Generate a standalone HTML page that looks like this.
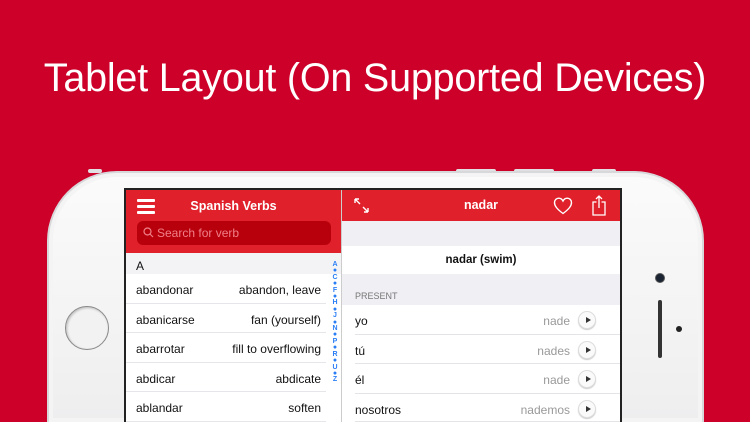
<!DOCTYPE html>
<html style="width:750px;height:422px;overflow:hidden"><head><style>
*{margin:0;padding:0;box-sizing:border-box}
body{width:750px;height:422px;overflow:hidden;background:#cc0029;font-family:"Liberation Sans",sans-serif;position:relative}
.title{position:absolute;top:56px;left:0;width:750px;text-align:center;color:#fff;font-size:39.5px;letter-spacing:-0.2px}
.phone{position:absolute;left:47px;top:171px;width:657px;height:251px;border-radius:70px 70px 0 0;background:linear-gradient(#fbfbfb,#eeeeef);border:2px solid #d8d8da;border-bottom:none;box-shadow:inset 0 0 0 4px #f4f4f5}
.btn{position:absolute;top:169px;height:4px;background:#e0e0e3;border-radius:2px}
.screen{position:absolute;left:124px;top:188px;width:498px;height:234px;background:#222;}
.left{position:absolute;left:126px;top:190px;width:215px;height:232px;background:#fff;overflow:hidden}
.lh{height:63px;background:#e0202a;position:relative}
.lh .t{position:absolute;top:9px;width:100%;text-align:center;color:#fff;font-weight:bold;font-size:12.5px}
.ham{position:absolute;left:11px;top:9px;width:18px}
.ham i{display:block;height:2.5px;background:#fff;margin-bottom:3.5px;border-radius:1px}
.search{position:absolute;left:11px;top:31px;width:194px;height:24px;border-radius:6px;background:#b8000c;color:#f08088;font-size:12px;line-height:24px;padding-left:20px}
.search svg{position:absolute;left:6px;top:6px}
.sec{height:21px;background:#f3f3f6;font-size:12px;padding:6px 0 0 10px;color:#111}
.row{height:29.5px;border-bottom:1px solid #e6e6ea;font-size:12px;color:#111;position:relative;margin-right:15px}
.row span{position:absolute;top:9px}
.row .a{left:10px}.row .b{right:5px}
.idx{position:absolute;left:330px;top:262px;width:10px;font-size:7px;color:#2a7ef5;text-align:center;line-height:6.4px;font-weight:bold}
.right{position:absolute;left:341px;top:190px;width:279px;height:232px;background:#efeff4;border-left:1px solid #ccc;overflow:hidden}
.rh{height:31px;background:#e0202a;position:relative;color:#fff;font-weight:bold;font-size:12.5px;text-align:center;line-height:31px}
.card{position:absolute;top:56px;left:0;width:100%;height:28px;background:#fff;text-align:center;font-weight:bold;font-size:11.5px;line-height:28px;color:#111}
.pres{position:absolute;top:101px;left:13px;font-size:9px;color:#777}
.list{position:absolute;top:115px;left:0;width:100%;background:#fff}
.cr{height:29.5px;position:relative;margin-left:13px;border-bottom:1px solid #e4e4e8;font-size:12px}
.cr .p{position:absolute;left:0;top:9px;color:#111}
.cr .v{position:absolute;right:50px;top:9px;color:#999}
.cr .pl{position:absolute;right:24px;top:6px;width:18px;height:18px;border-radius:50%;border:1px solid #ddd;background:#fafafa;box-shadow:0 1px 1px #ccc}
.cr .pl:after{content:"";position:absolute;left:7px;top:5px;border-left:5px solid #333;border-top:3.5px solid transparent;border-bottom:3.5px solid transparent}
</style></head><body>
<div class="title">Tablet Layout (On Supported Devices)</div>
<div class="btn" style="left:88px;width:14px"></div>
<div class="btn" style="left:456px;width:40px"></div>
<div class="btn" style="left:514px;width:40px"></div>
<div class="btn" style="left:592px;width:24px"></div>
<div class="phone"></div>
<div style="position:absolute;left:65px;top:306px;width:44px;height:44px;border-radius:50%;border:1.5px solid #888;background:#f2f2f3;box-shadow:inset 1px 1px 2px #bbb"></div>
<div style="position:absolute;left:655px;top:273px;width:10px;height:10px;border-radius:50%;background:#1b2433;border:1.5px solid #555"></div>
<div style="position:absolute;left:658px;top:300px;width:4px;height:58px;border-radius:2px;background:#333"></div>
<div style="position:absolute;left:676px;top:326px;width:6px;height:6px;border-radius:50%;background:#222"></div>
<div class="screen"></div>
<div class="left">
<div class="lh"><div class="ham"><i></i><i></i><i></i></div><div class="t">Spanish Verbs</div>
<div class="search"><svg width="11" height="11" viewBox="0 0 11 11"><circle cx="4.5" cy="4.5" r="3.5" fill="none" stroke="#f08088" stroke-width="1.2"/><path d="M7 7L10 10" stroke="#f08088" stroke-width="1.2"/></svg>Search for verb</div></div>
<div class="sec">A</div>
<div class="row"><span class="a">abandonar</span><span class="b">abandon, leave</span></div>
<div class="row"><span class="a">abanicarse</span><span class="b">fan (yourself)</span></div>
<div class="row"><span class="a">abarrotar</span><span class="b">fill to overflowing</span></div>
<div class="row"><span class="a">abdicar</span><span class="b">abdicate</span></div>
<div class="row"><span class="a">ablandar</span><span class="b">soften</span></div>
</div>
<div class="idx">A<br>●<br>C<br>●<br>F<br>●<br>H<br>●<br>J<br>●<br>N<br>●<br>P<br>●<br>R<br>●<br>U<br>●<br>Z</div>
<div class="right">
<div class="rh">nadar
<svg style="position:absolute;left:12px;top:8px" width="15" height="15" viewBox="0 0 15 15" fill="none" stroke="#fff" stroke-width="1.4"><path d="M1 1L6 6M1 1v4M1 1h4M14 14L9 9M14 14v-4M14 14h-4"/></svg>
<svg style="position:absolute;left:211px;top:7px" width="20" height="18" viewBox="0 0 20 18" fill="none" stroke="#fff" stroke-width="1.4"><path d="M10 16.5C4 12 1.5 9 1.5 5.5 1.5 3 3.5 1.2 5.8 1.2 7.8 1.2 9.2 2.5 10 4 10.8 2.5 12.2 1.2 14.2 1.2 16.5 1.2 18.5 3 18.5 5.5 18.5 9 16 12 10 16.5Z"/></svg>
<svg style="position:absolute;left:250px;top:5px" width="14" height="21" viewBox="0 0 14 21" fill="none" stroke="#fff" stroke-width="1.3"><path d="M4.5 7H1v13h12V7H9.5M7 1v12M4 4l3-3 3 3"/></svg>
</div>
<div class="card">nadar (swim)</div>
<div class="pres">PRESENT</div>
<div class="list">
<div class="cr"><span class="p">yo</span><span class="v">nade</span><span class="pl"></span></div>
<div class="cr"><span class="p">tú</span><span class="v">nades</span><span class="pl"></span></div>
<div class="cr"><span class="p">él</span><span class="v">nade</span><span class="pl"></span></div>
<div class="cr" style="height:28px"><span class="p">nosotros</span><span class="v">nademos</span><span class="pl"></span></div>
</div>
</div>
</body></html>
